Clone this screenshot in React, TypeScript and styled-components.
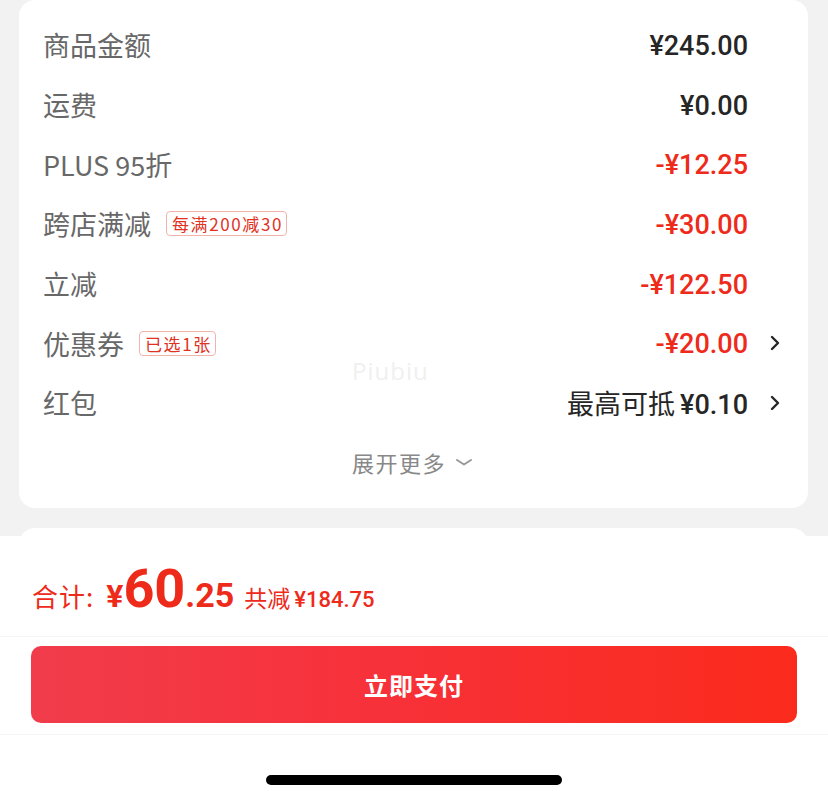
import React from "react";
import styled, { createGlobalStyle } from "styled-components";

const GlobalStyle = createGlobalStyle`
  html, body {
    margin: 0;
    padding: 0;
    background: #f2f2f2;
    width: 828px;
    height: 802px;
    overflow: hidden;
  }
  * { box-sizing: border-box; }
`;

const CJK = `"Noto Sans CJK SC", "Noto Sans", sans-serif`;
const NUM = `Roboto, "Noto Sans CJK SC", sans-serif`;
const RED = "#ee2a1a";

const Page = styled.div`
  width: 828px;
  height: 802px;
  display: flex;
  flex-direction: column;
  gap: 20px;
  padding: 0 20px 0 19px;
  font-family: ${CJK};
`;

const Card = styled.section`
  position: relative;
  background: #fff;
  border-radius: 16px;
  padding: 15px 0 17px;
  display: flex;
  flex-direction: column;
`;

const NextCard = styled.section`
  background: #fff;
  border-radius: 16px;
  height: 200px;
`;

const Row = styled.div`
  height: 59.7px;
  display: grid;
  grid-template-columns: 1fr auto 36px;
  align-items: center;
  padding: 0 24px;
`;

const LabelWrap = styled.div`
  display: flex;
  align-items: center;
  gap: 15px;
`;

const Label = styled.span`
  font-family: ${CJK};
  font-size: 27px;
  font-weight: 400;
  color: #686868;
  line-height: 1;
`;

const Tag = styled.span`
  font-family: ${CJK};
  font-size: 17px;
  color: #e0321f;
  border: 1px solid #f2b3ac;
  border-radius: 4px;
  padding: 0 3px 0 5px;
  height: 25px;
  line-height: 23px;
  letter-spacing: 1.6px;
  display: inline-flex;
  align-items: center;
`;

const Value = styled.span<{ $red?: boolean }>`
  font-family: ${NUM};
  font-size: 27px;
  font-weight: 500;
  line-height: 1;
  padding-top: 3px;
  color: ${(p) => (p.$red ? RED : "#262626")};
  text-align: right;
  white-space: nowrap;
`;

const ValueCJK = styled.span`
  font-family: ${CJK};
  font-size: 27px;
  font-weight: 400;
  color: #262626;
  margin-right: 5px;
`;

const ChevronSlot = styled.span`
  display: flex;
  justify-content: flex-end;
  padding-right: 4px;
`;

const Expand = styled.div`
  height: 58px;
  display: flex;
  align-items: center;
  justify-content: center;
  gap: 9px;
  font-size: 22px;
  color: #888;
  letter-spacing: 1.5px;
  padding-right: 2px;
`;

const Watermark = styled.span`
  position: absolute;
  left: 333px;
  top: 354px;
  font-family: "Open Sans", sans-serif;
  font-size: 24px;
  color: #f0f0f0;
  letter-spacing: 1px;
`;

const BottomBar = styled.footer`
  position: fixed;
  left: 0;
  right: 0;
  bottom: 0;
  height: 266px;
  background: #fff;
  display: flex;
  flex-direction: column;
`;

const TotalRow = styled.div`
  height: 101px;
  padding: 26px 32px 0;
  display: flex;
  align-items: baseline;
  color: ${RED};
  border-bottom: 1px solid #f6f6f6;
`;

const TotalLabel = styled.span`
  font-family: ${CJK};
  font-size: 26px;
  line-height: 1;
  letter-spacing: 1px;
  margin-right: 12px;
`;

const Money = styled.span<{ $size: number }>`
  font-family: ${NUM};
  font-weight: 700;
  font-size: ${(p) => p.$size}px;
  line-height: 1;
`;

const Saved = styled.span`
  font-family: ${CJK};
  font-size: 23px;
  line-height: 1;
  margin-left: 10px;
`;

const SavedNum = styled.span`
  font-family: ${NUM};
  font-weight: 500;
  font-size: 22px;
  margin-left: 4px;
`;

const ButtonArea = styled.div`
  padding: 9px 31px 11px;
  border-bottom: 1px solid #f6f6f6;
`;

const PayButton = styled.button`
  width: 100%;
  height: 77px;
  border: none;
  border-radius: 10px;
  background: linear-gradient(90deg, #f13c4b 0%, #f7313a 45%, #fb2b1c 100%);
  color: #fff;
  font-family: ${CJK};
  font-size: 24px;
  font-weight: 700;
  letter-spacing: 1px;
`;

const HomeArea = styled.div`
  flex: 1;
  display: flex;
  justify-content: center;
  padding-top: 40px;
`;

const HomeIndicator = styled.div`
  width: 296px;
  height: 10px;
  border-radius: 5px;
  background: #000;
`;

const Chevron = () => (
  <svg width="10" height="16" viewBox="0 0 10 16">
    <path d="M2 2 L8 8 L2 14" fill="none" stroke="#262626" strokeWidth="2.4" strokeLinecap="round" strokeLinejoin="round" />
  </svg>
);

const ChevronDown = () => (
  <svg width="18" height="10" viewBox="0 0 18 10">
    <path d="M2 3 L9 7.5 L16 3" fill="none" stroke="#999" strokeWidth="2" strokeLinecap="round" strokeLinejoin="round" />
  </svg>
);

type Item = {
  label: string;
  tag?: string;
  value: string;
  cjkPrefix?: string;
  red?: boolean;
  arrow?: boolean;
};

const items: Item[] = [
  { label: "商品金额", value: "¥245.00" },
  { label: "运费", value: "¥0.00" },
  { label: "PLUS 95折", value: "-¥12.25", red: true },
  { label: "跨店满减", tag: "每满200减30", value: "-¥30.00", red: true },
  { label: "立减", value: "-¥122.50", red: true },
  { label: "优惠券", tag: "已选1张", value: "-¥20.00", red: true, arrow: true },
  { label: "红包", cjkPrefix: "最高可抵", value: "¥0.10", arrow: true },
];

export default function App() {
  return (
    <>
      <GlobalStyle />
      <Page>
        <Card>
          {items.map((it) => (
            <Row key={it.label}>
              <LabelWrap>
                <Label>{it.label}</Label>
                {it.tag && <Tag>{it.tag}</Tag>}
              </LabelWrap>
              <Value $red={it.red}>
                {it.cjkPrefix && <ValueCJK>{it.cjkPrefix}</ValueCJK>}
                {it.value}
              </Value>
              <ChevronSlot>{it.arrow && <Chevron />}</ChevronSlot>
            </Row>
          ))}
          <Expand>
            展开更多
            <ChevronDown />
          </Expand>
          <Watermark>Piubiu</Watermark>
        </Card>
        <NextCard />
      </Page>
      <BottomBar>
        <TotalRow>
          <TotalLabel>合计:</TotalLabel>
          <Money $size={32}>¥</Money>
          <Money $size={54}>60</Money>
          <Money $size={34}>.25</Money>
          <Saved>
            共减
            <SavedNum>¥184.75</SavedNum>
          </Saved>
        </TotalRow>
        <ButtonArea>
          <PayButton>立即支付</PayButton>
        </ButtonArea>
        <HomeArea>
          <HomeIndicator />
        </HomeArea>
      </BottomBar>
    </>
  );
}
